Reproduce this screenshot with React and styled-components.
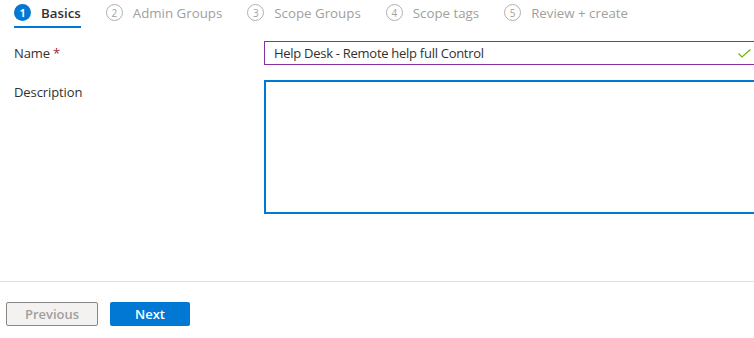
import React from 'react';
import styled, { createGlobalStyle } from 'styled-components';

const Global = createGlobalStyle`
    html, body {
        margin: 0;
        padding: 0;
        background: #ffffff;
        overflow: hidden;
    }
    body {
        font-family: "Open Sans", "Noto Sans", sans-serif;
        color: #323130;
    }
`

const Page = styled.div`
    display: flex;
    flex-direction: column;
    height: 100vh;
    width: 100%;
    overflow: hidden;
`

const TabBar = styled.div`
    display: flex;
    gap: 25px;
    padding: 0 14px;
    white-space: nowrap;
`

const Tab = styled.div`
    display: flex;
    align-items: center;
    gap: 10px;
    height: 25px;
    padding-bottom: 1px;
    border-bottom: 2px solid ${props => props.$active ? '#0078d4' : 'transparent'};
    font-size: 13.3px;
    font-weight: ${props => props.$active ? 600 : 400};
    color: ${props => props.$active ? '#323130' : '#a19f9d'};
`

const StepCircle = styled.span`
    display: flex;
    align-items: center;
    justify-content: center;
    box-sizing: border-box;
    width: 17px;
    height: 17px;
    border-radius: 50%;
    font-size: 10px;
    font-weight: ${props => props.$active ? 700 : 400};
    background: ${props => props.$active ? '#0078d4' : 'transparent'};
    color: ${props => props.$active ? '#ffffff' : '#a19f9d'};
    border: ${props => props.$active ? 'none' : '1px solid #b3b0ad'};
`

const Form = styled.div`
    display: flex;
    flex-direction: column;
    gap: 15px;
    padding: 13px 0 0 14px;
`

const Row = styled.div`
    display: grid;
    grid-template-columns: 250px 500px;
    align-items: start;
`

const Label = styled.label`
    font-size: 13px;
    line-height: 24px;
    color: #323130;
    letter-spacing: -0.1px;
`

const Required = styled.span`
    color: #a4262c;
    margin-left: 3px;
`

const InputWrap = styled.div`
    position: relative;
    display: flex;
    align-items: center;
    box-sizing: border-box;
    height: 24px;
    border: 1px solid #8a2da5;
    padding: 0 9px;
    font-size: 13px;
    letter-spacing: -0.28px;
    color: #323130;
    white-space: nowrap;
`

const Check = styled.svg`
    position: absolute;
    right: 12px;
    top: 7px;
`

const TextArea = styled.div`
    box-sizing: border-box;
    height: 134px;
    border: 2px solid #0078d4;
`

const Footer = styled.div`
    margin-top: auto;
    border-top: 1px solid #e1dfdd;
    padding: 20px 6px 12px;
    display: flex;
    gap: 12px;
`

const Button = styled.button`
    box-sizing: border-box;
    height: 24px;
    width: ${props => props.$width}px;
    border-radius: 2px;
    font-family: "Open Sans", "Noto Sans", sans-serif;
    font-size: 13px;
    font-weight: 600;
    padding: 0;
    background: ${props => props.$primary ? '#0078d4' : '#f3f2f1'};
    color: ${props => props.$primary ? '#ffffff' : '#a19f9d'};
    border: ${props => props.$primary ? 'none' : '1px solid #8a8886'};
`

const steps = ['Basics', 'Admin Groups', 'Scope Groups', 'Scope tags', 'Review + create'];

export default function App() {
    return (
        <Page>
            <Global />
            <TabBar>
                {steps.map((s, i) => (
                    <Tab key={s} $active={i === 0}>
                        <StepCircle $active={i === 0}>{i + 1}</StepCircle>
                        {s}
                    </Tab>
                ))}
            </TabBar>
            <Form>
                <Row>
                    <Label>Name<Required>*</Required></Label>
                    <InputWrap>
                        Help Desk - Remote help full Control
                        <Check width="13" height="9" viewBox="0 0 13 9">
                            <polyline points="0.5,4.5 4,8 12.5,0.5" fill="none" stroke="#6bb700" strokeWidth="1.2" />
                        </Check>
                    </InputWrap>
                </Row>
                <Row>
                    <Label>Description</Label>
                    <TextArea />
                </Row>
            </Form>
            <Footer>
                <Button $width={92}>Previous</Button>
                <Button $width={80} $primary>Next</Button>
            </Footer>
        </Page>
    );
}
